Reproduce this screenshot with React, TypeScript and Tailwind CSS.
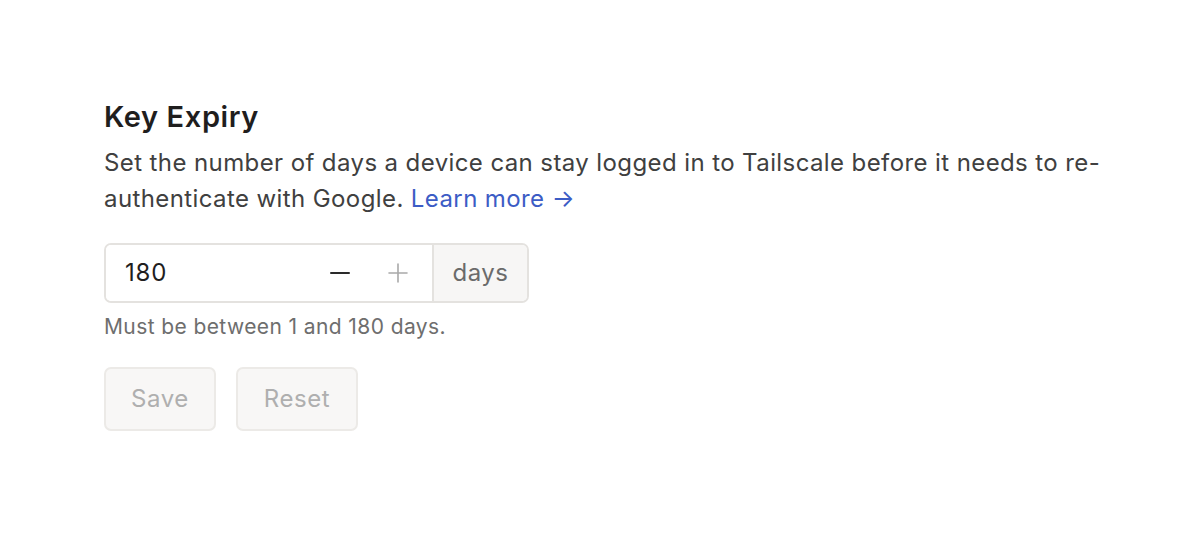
import React, { useState } from "react";

const MinusIcon = ({ className }: { className?: string }) => (
  <svg viewBox="0 0 20 20" className={className} fill="none" stroke="currentColor" strokeWidth="2" strokeLinecap="round">
    <path d="M1 10h18" />
  </svg>
);

const PlusIcon = ({ className }: { className?: string }) => (
  <svg viewBox="0 0 20 20" className={className} fill="none" stroke="currentColor" strokeWidth="1.6" strokeLinecap="round">
    <path d="M1 10h18M10 1v18" />
  </svg>
);

const KeyExpiry = () => {
  const [days, setDays] = useState("180");

  return (
    <div className="pl-[104px] pt-[98px]">
      <h2 className="text-[29px] leading-[37px] font-semibold text-[#1f1e1e] tracking-[0.6px]">
        Key Expiry
      </h2>
      <p className="mt-[10px] w-[1010px] text-[24px] leading-[36px] text-[#404040] tracking-[0.4px]">
        Set the number of days a device can stay logged in to Tailscale before it needs to re-authenticate with Google.{" "}
        <a href="#" className="text-[#3c5cc5]">
          Learn more →
        </a>
      </p>

      {/* Number input */}
      <div className="mt-[26px] flex h-[60px] w-[425px] rounded-[7px] border-2 border-[#e4e2df] overflow-hidden">
        <div className="flex flex-1 items-center bg-white">
          <input
            value={days}
            onChange={(e) => setDays(e.target.value)}
            className="w-[190px] pl-[19px] text-[24px] text-[#1f1e1e] tracking-[0.8px] outline-none bg-transparent"
          />
          <div className="ml-auto flex items-center gap-[38px] pr-[24px]">
            <MinusIcon className="w-5 h-5 text-[#2a2a2a]" />
            <PlusIcon className="w-5 h-5 text-[#a9a9a9]" />
          </div>
        </div>
        <div className="flex w-[95px] items-center justify-center border-l-2 border-[#e4e2df] bg-[#f7f6f5] text-[24px] text-[#6b6b6b] tracking-[0.5px]">
          days
        </div>
      </div>
      <p className="mt-[10px] text-[21px] leading-[28px] text-[#6e6e6e] tracking-[0.4px]">
        Must be between 1 and 180 days.
      </p>

      <div className="mt-[26px] flex gap-[20px]">
        <button className="h-[64px] w-[112px] rounded-[7px] border-2 border-[#eceae7] bg-[#f8f7f6] text-[24px] text-[#afafaf] tracking-[0.6px]">
          Save
        </button>
        <button className="h-[64px] w-[122px] rounded-[7px] border-2 border-[#eceae7] bg-[#f8f7f6] text-[24px] text-[#afafaf] tracking-[0.6px]">
          Reset
        </button>
      </div>
    </div>
  );
};

export default function App() {
  return (
    <div className="min-h-[537px] bg-white" style={{ fontFamily: "Inter, 'Noto Sans', sans-serif" }}>
      <KeyExpiry />
    </div>
  );
}
